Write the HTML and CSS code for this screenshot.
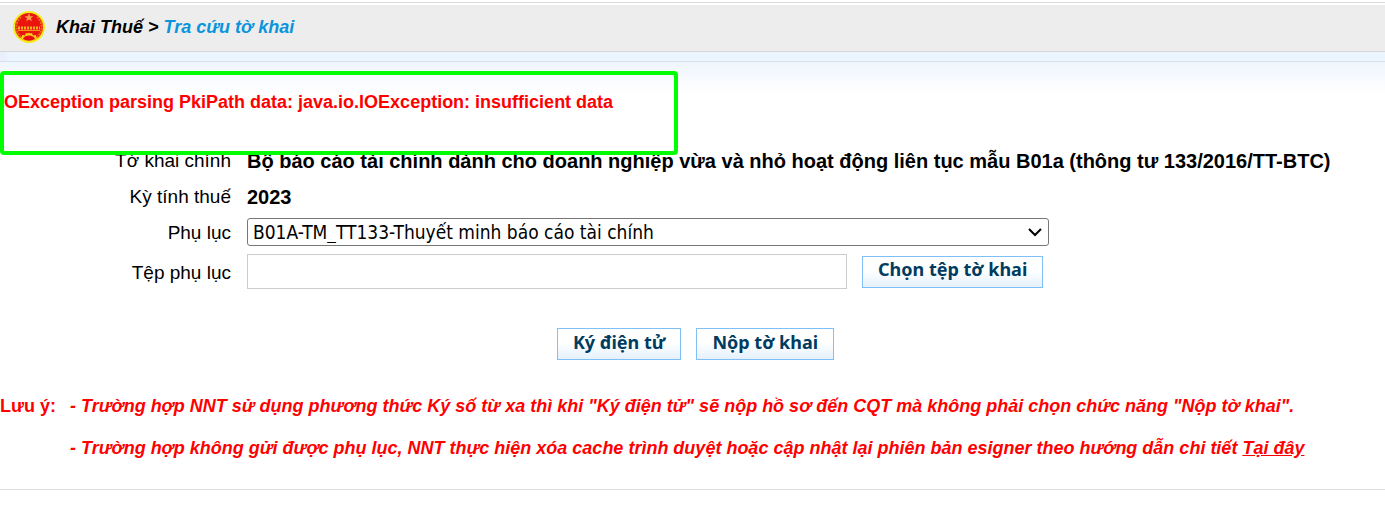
FILE: index.html
```
<!DOCTYPE html>
<html lang="vi">
  <head>
    <meta charset="UTF-8" />
    <meta name="viewport" content="width=device-width, initial-scale=1.0" />
    <title>Khai Thuế - Tra cứu tờ khai</title>
    <link rel="stylesheet" href="styles.css">
  </head>
  <body>
    <header class="breadcrumb">
      <svg class="emblem" viewBox="0 0 34 34" aria-hidden="true">
        <circle cx="17" cy="17" r="15" fill="#ea150c" stroke="#f6ec1a" stroke-width="2" />
        <path d="M9 7 A13 13 0 0 0 9 27 M25 7 A13 13 0 0 1 25 27" fill="none" stroke="#f0701a" stroke-width="2" stroke-dasharray="2 1" />
        <path d="M17 3 L18.200 6.200 H21.500 L18.900 8.200 L19.900 11.300 L17 9.400 L14.100 11.300 L15.100 8.200 L12.500 6.200 H15.800 Z" fill="#fba04c" />
        <path d="M6 20.500 H28" stroke="#f5951c" stroke-width="1" />
        <path d="M6 18 H28" stroke="#f5b01c" stroke-width="3" stroke-dasharray="2 1" />
        <path d="M8 28 L10 27 L10 25 L13 25.500 L14 23 L16 23.500 L17 22.500 L18 23.500 L20 23 L21 25.500 L24 25 L24 27 L26 28 Q17 35 8 28 Z" fill="#f6d41c" />
        <path d="M11 29 Q12 25.500 17 25.500 Q22 25.500 23 29 Q17 32.500 11 29 Z" fill="#e80f14" />
      </svg>
      <span>Khai Thuế &gt; <a href="#">Tra cứu tờ khai</a></span>
    </header>
    <div class="strip"></div>

    <main class="content">
      <div class="message">
        <p class="error">OException parsing PkiPath data: java.io.IOException: insufficient data</p>
        <div class="highlight"></div>
      </div>

      <form>
        <div class="fields">
          <span class="label">Tờ khai chính</span>
          <strong>Bộ báo cáo tài chính dành cho doanh nghiệp vừa và nhỏ hoạt động liên tục mẫu B01a (thông tư 133/2016/TT-BTC)</strong>

          <span class="label">Kỳ tính thuế</span>
          <strong>2023</strong>

          <label class="label" for="phuLuc">Phụ lục</label>
          <div class="select-wrap">
            <select id="phuLuc">
              <option>B01A-TM_TT133-Thuyết minh báo cáo tài chính</option>
            </select>
            <svg class="arrow" viewBox="0 0 14 10" aria-hidden="true">
              <path d="M1 2 L7 8 L13 2" fill="none" stroke="#000" stroke-width="2" />
            </svg>
          </div>

          <label class="label" for="tepPhuLuc">Tệp phụ lục</label>
          <div class="file-row">
            <input type="text" id="tepPhuLuc" />
            <button type="button">Chọn tệp tờ khai</button>
          </div>
        </div>

        <div class="actions">
          <button type="button">Ký điện tử</button>
          <button type="button">Nộp tờ khai</button>
        </div>
      </form>

      <div class="notes">
        <span>Lưu ý:</span>
        <div class="note-list">
          <p>- Trường hợp NNT sử dụng phương thức Ký số từ xa thì khi "Ký điện tử" sẽ nộp hồ sơ đến CQT mà không phải chọn chức năng "Nộp tờ khai".</p>
          <p>- Trường hợp không gửi được phụ lục, NNT thực hiện xóa cache trình duyệt hoặc cập nhật lại phiên bản esigner theo hướng dẫn chi tiết <a href="#">Tại đây</a></p>
        </div>
      </div>
    </main>
  </body>
</html>
```
FILE: styles.css
```
* {
  box-sizing: border-box;
}
body {
  margin: 0;
  padding-top: 2px;
  background-color: #fff;
  font-family: Arial, "Liberation Sans", sans-serif;
  font-size: 20px;
  line-height: 24px;
  color: #000;
}
p {
  margin: 0;
}
.breadcrumb {
  display: flex;
  align-items: center;
  gap: 10px;
  height: 50px;
  padding-left: 12px;
  background-color: #ededed;
  border-top: 1px solid #dcdcdc;
  border-bottom: 1px solid #d8d8d8;
  box-shadow: inset 0 2px #fff;
  font-size: 18px;
  font-weight: bold;
  font-style: italic;
}
.breadcrumb a {
  color: #0a94dc;
  text-decoration: none;
}
.emblem {
  width: 34px;
  height: 34px;
}
.strip {
  height: 9px;
  background: linear-gradient(to right, #e9effc 7px, #ebf5ff 7px);
}
.content {
  border-top: 1px solid #d9e0e6;
  border-bottom: 1px solid #dcdfdf;
  background: linear-gradient(#eff5fe, #fff 32px);
  padding-bottom: 29px;
}
.message {
  position: relative;
  padding: 28px 0 32px 4px;
}
.error {
  color: #f00;
  font-size: 18px;
  font-weight: bold;
}
/* frame drawn over the message and the top of the first row */
.highlight {
  position: absolute;
  top: 9px;
  left: 0;
  width: 678px;
  height: 84px;
  border: 4px solid #0f0;
  border-radius: 4px;
}
.fields {
  display: grid;
  grid-template-columns: 231px 1fr;
  column-gap: 16px;
  row-gap: 8px;
  align-items: center;
}
.fields strong,
.label {
  padding-top: 2px;
  line-height: 26px;
}
.label {
  font-size: 19px;
  text-align: right;
}
.select-wrap {
  position: relative;
  width: 802px;
  height: 28px;
}
select {
  display: block;
  width: 100%;
  height: 28px;
  padding: 0 30px 0 5px;
  appearance: none;
  background-color: #fff;
  border: 1px solid #767676;
  border-radius: 3px;
  color: #000;
  font-family: Tahoma, "DejaVu Sans Condensed", "Noto Sans", sans-serif;
  font-size: 19px;
}
.arrow {
  position: absolute;
  top: 9px;
  right: 7px;
  width: 14px;
  height: 10px;
  pointer-events: none;
}
.file-row {
  display: flex;
  align-items: center;
  gap: 15px;
}
input {
  width: 600px;
  height: 35px;
  border: 1px solid #ccc;
  background-color: #fff;
  font-size: 20px;
}
button {
  height: 32px;
  padding: 0 15px 5px;
  border: 1px solid #7fc1f7;
  background: linear-gradient(#fff 45%, #e4f1fe);
  color: #003c5f;
  font-family: Tahoma, "Noto Sans", sans-serif;
  font-size: 18px;
  font-weight: bold;
}
.actions {
  display: flex;
  justify-content: center;
  gap: 15px;
  margin-top: 39px;
  padding-left: 6px;
}
.notes {
  display: flex;
  gap: 14px;
  margin-top: 34px;
  color: #f00;
  font-size: 18px;
  font-weight: bold;
}
.note-list {
  display: flex;
  flex-direction: column;
  gap: 18px;
  font-style: italic;
}
.note-list a {
  color: #f00;
}
```
